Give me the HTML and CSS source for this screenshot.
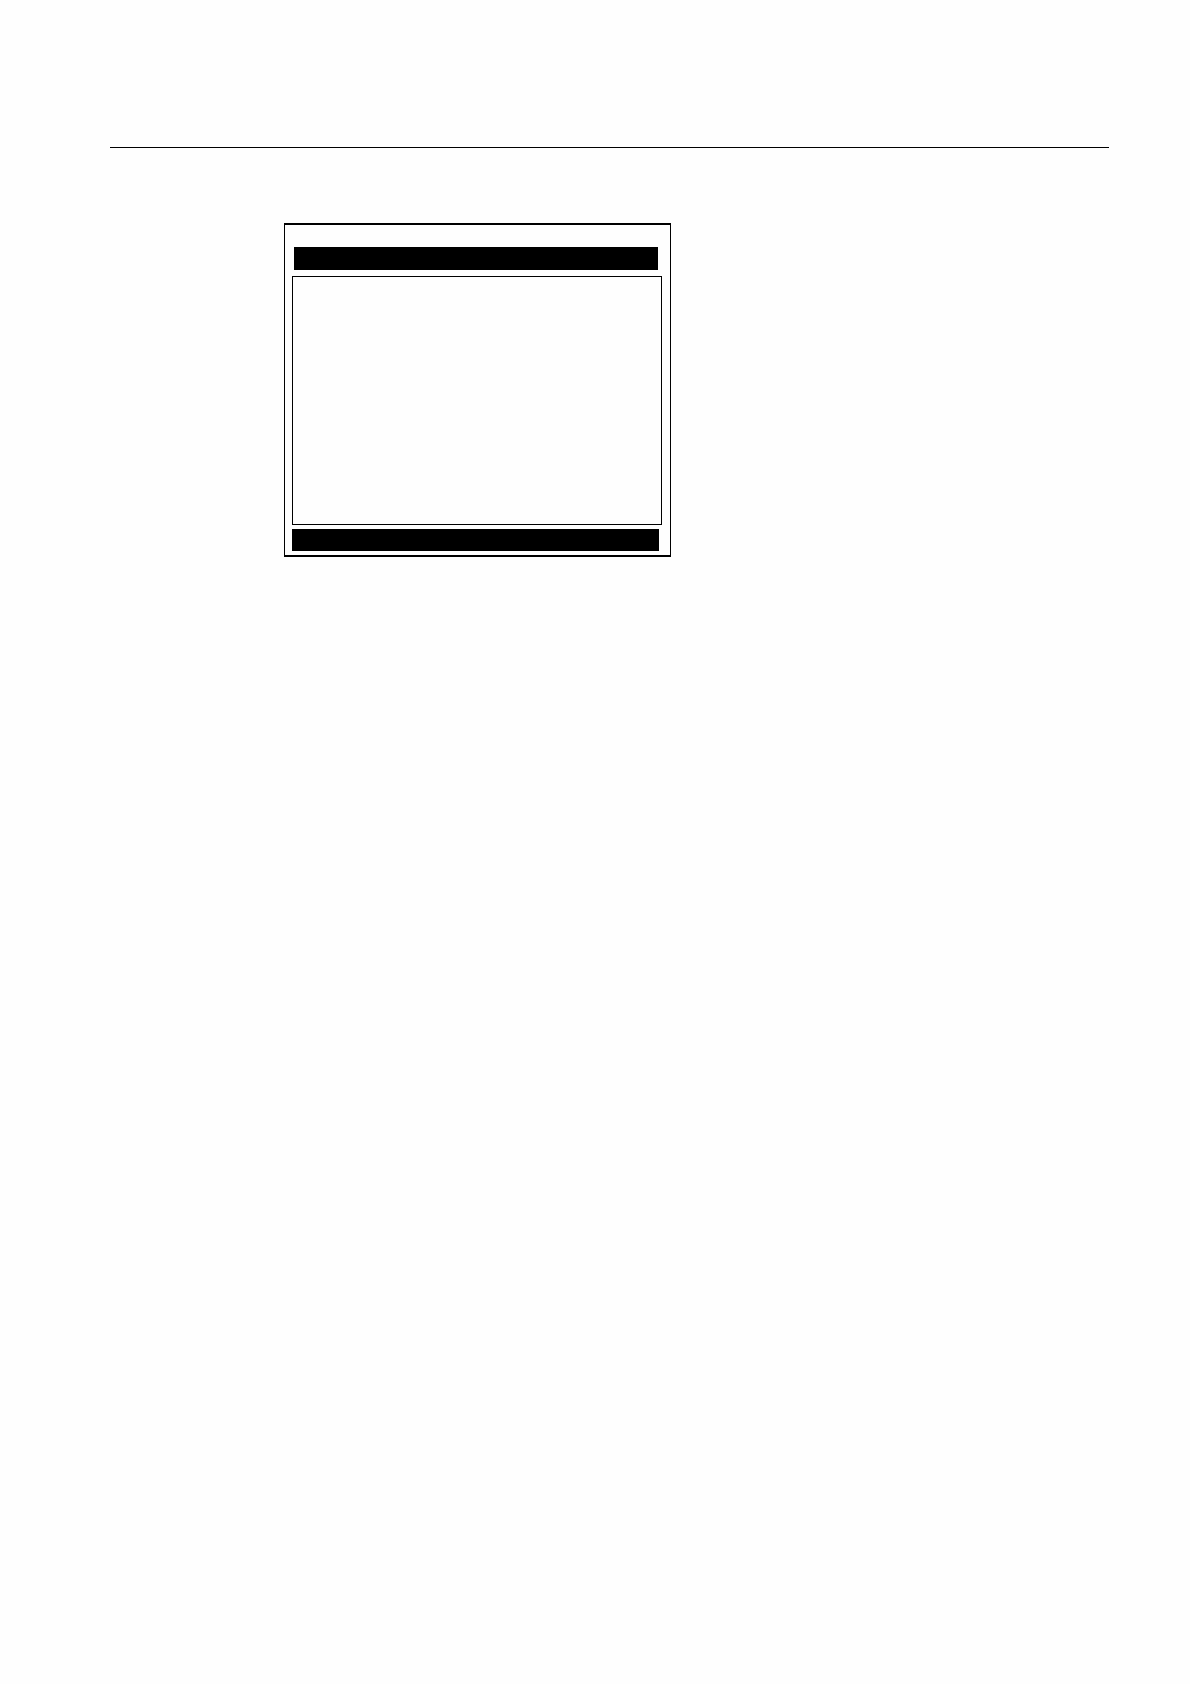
FILE: index.html
```html
<!DOCTYPE html>
<html lang="en">
<head>
    <meta charset="utf-8">
    <meta name="viewport" content="width=device-width, initial-scale=1">
    <link rel="stylesheet" href="styles.css">
</head>
<body>
    <main class="page">
        <hr class="page-rule">
        <div class="screen">
            <div class="title-bar"></div>
            <div class="screen-content"></div>
            <div class="status-bar"></div>
        </div>
    </main>
</body>
</html>
```
FILE: styles.css
```css
* {
    box-sizing: border-box;
}
body {
    margin: 0;
    background-color: #fefefe;
    font-family: "Liberation Sans", Arial, sans-serif;
}
.page {
    padding: 147px 81px 80px 110px;
}
.page-rule {
    margin: 0 0 75px;
    border: none;
    border-top: 1px solid black;
}

/* Empty display with a title bar and a status bar */
.screen {
    display: flex;
    flex-direction: column;
    max-width: 387px;
    margin-left: 174px;
    padding: 22px 8px 4px 7px;
    border: 1px solid black;
    border-width: 2px 1px;
}
.title-bar {
    height: 23px;
    margin: 0 4px 6px 2px;
    background-color: black;
}
.screen-content {
    min-height: 249px;
    border: 1px solid black;
}
.status-bar {
    height: 22px;
    margin: 4px 3px 0 0;
    background-color: black;
}
```
